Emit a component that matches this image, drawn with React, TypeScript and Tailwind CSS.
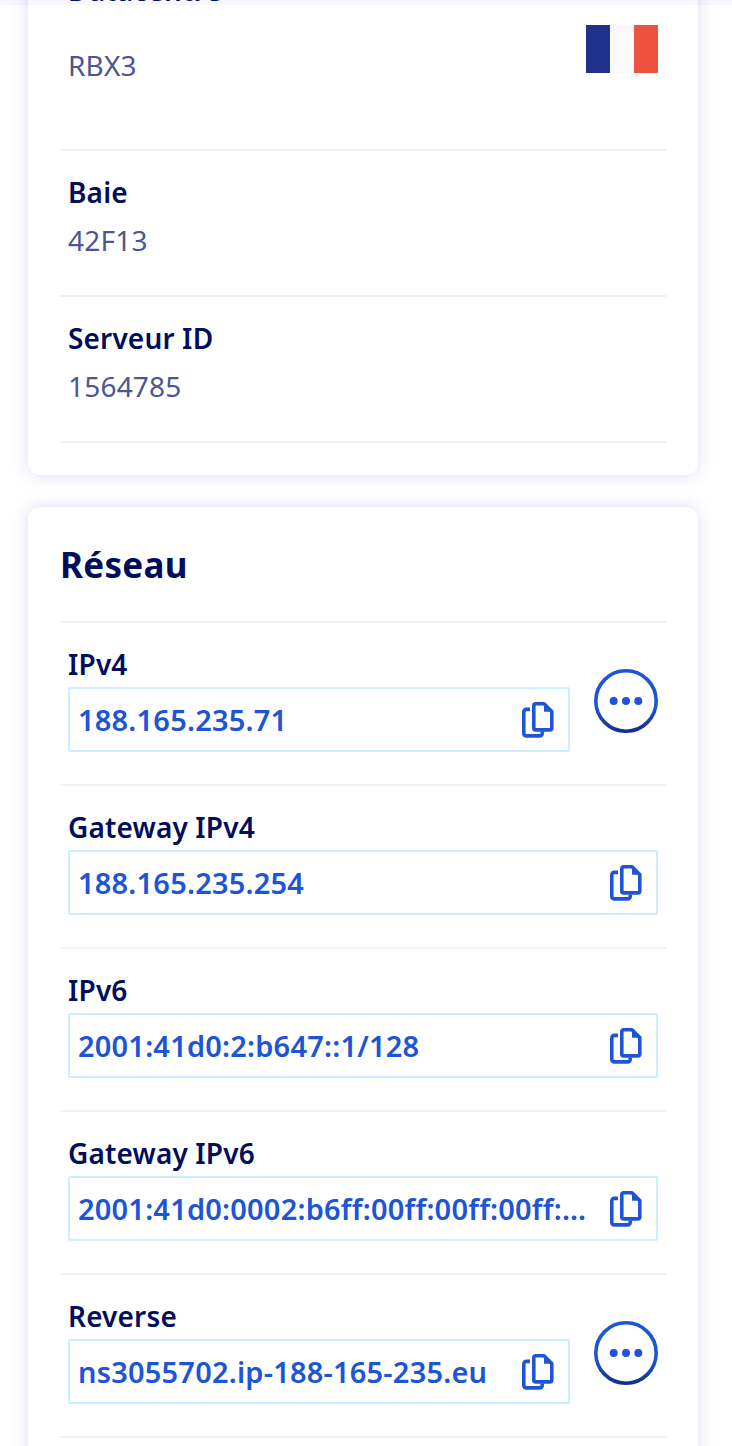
const font = { fontFamily: '"Noto Sans", sans-serif' }

const CopyIcon = () => (
  <svg width="32" height="36" viewBox="0 0 32 36" fill="none" className="shrink-0">
    <path d="M8 7.400H4.300A2.500 2.500 0 0 0 1.800 9.900V31.400A2.500 2.500 0 0 0 4.300 33.900H17.700A2.500 2.500 0 0 0 20.200 31.400V29.500" stroke="#2054d6" strokeWidth="3.600" />
    <path d="M13.800 1.800H22L29.800 9.600V26A1.900 1.900 0 0 1 27.900 27.900H13.800A2 2 0 0 1 11.800 25.900V3.800A2 2 0 0 1 13.800 1.800Z" stroke="#2054d6" strokeWidth="3.600" strokeLinejoin="round" />
    <path d="M22 2V9.800H30Z" fill="#2054d6" />
  </svg>
)

const MoreButton = () => (
  <svg width="64" height="64" viewBox="0 0 64 64" className="mt-[24px] shrink-0">
    <defs>
      <linearGradient id="ring" x1="0" y1="0" x2="0" y2="1">
        <stop offset="0" stopColor="#2054d6" />
        <stop offset="0.6" stopColor="#2054d6" />
        <stop offset="1" stopColor="#14308a" />
      </linearGradient>
    </defs>
    <circle cx="32" cy="32" r="30.200" fill="none" stroke="url(#ring)" strokeWidth="3.600" />
    <circle cx="19.700" cy="32" r="4" fill="#2054d6" />
    <circle cx="32" cy="32" r="4" fill="#2054d6" />
    <circle cx="44.300" cy="32" r="4" fill="#2054d6" />
  </svg>
)

const InfoRow = ({ label, value }: { label: string; value: string }) => (
  <div className="h-[146px] border-b-2 border-[#f2f2f4] px-2 pt-[22px]">
    <p className="text-[28px] leading-[38px] font-semibold tracking-[0.15px] text-[#000e5c]">{label}</p>
    <p className="mt-[10px] text-[28px] leading-[38px] tracking-[0.2px] text-[#4d5592]">{value}</p>
  </div>
)

const networkRows = [
  { label: "IPv4", value: "188.165.235.71", more: true },
  { label: "Gateway IPv4", value: "188.165.235.254", more: false },
  { label: "IPv6", value: "2001:41d0:2:b647::1/128", more: false },
  { label: "Gateway IPv6", value: "2001:41d0:0002:b6ff:00ff:00ff:00ff:00ff", more: false },
  { label: "Reverse", value: "ns3055702.ip-188-165-235.eu", more: true },
]

export default function App() {
  return (
    <div className="relative h-[1446px] overflow-hidden bg-white pr-[34px] pl-[28px]" style={font}>
      {/* shadow of the fixed header, above the scrolled page */}
      <div className="absolute inset-x-0 top-0 z-10 h-[5px] bg-[#5a5ad2]/5" />
      <section className="-mt-[39px] rounded-b-xl bg-white px-[32px] pb-[32px] shadow-[0_0_16px_rgba(90,90,210,0.22)]">
        <div className="flex h-[190px] items-start justify-between border-b-2 border-[#f2f2f4] px-2 pt-[10px]">
          <div>
            <p className="text-[28px] leading-[38px] font-semibold tracking-[0.15px] text-[#000e5c]">Datacentre</p>
            <p className="mt-[37px] text-[28px] leading-[38px] tracking-[0.2px] text-[#4d5592]">RBX3</p>
          </div>
          <div className="mt-[54px] flex h-[48px] w-[72px]">
            <div className="flex-1 bg-[#20318c]" />
            <div className="flex-1 bg-[#f9f9f9]" />
            <div className="flex-1 bg-[#ee5340]" />
          </div>
        </div>
        <InfoRow label="Baie" value="42F13" />
        <InfoRow label="Serveur ID" value="1564785" />
      </section>

      <section className="mt-[32px] rounded-t-xl bg-white px-[32px] pb-[40px] shadow-[0_0_16px_rgba(90,90,210,0.22)]">
        <h2 className="flex h-[116px] items-center border-b-2 border-[#f2f2f4] pt-[2px] text-[35px] font-bold tracking-[0.3px] text-[#000e5c]">Réseau</h2>
        {networkRows.map((row) => (
          <div key={row.label} className="flex h-[163px] items-start gap-[24px] border-b-2 border-[#f2f2f4] px-2 pt-[22px]">
            <div className="min-w-0 flex-1 self-start">
              <p className="text-[28px] leading-[38px] font-semibold tracking-[0.15px] text-[#000e5c]">{row.label}</p>
              <div className="mt-[4px] flex h-[65px] items-center gap-[14px] rounded-[2px] border-2 border-[#ccefff] pr-[14px] pl-[8px]">
                <span className="min-w-0 flex-1 truncate pt-[1px] text-[29px] font-semibold tracking-[0.2px] text-[#2054d6]">{row.value}</span>
                <CopyIcon />
              </div>
            </div>
            {row.more && <MoreButton />}
          </div>
        ))}
      </section>
    </div>
  )
}
